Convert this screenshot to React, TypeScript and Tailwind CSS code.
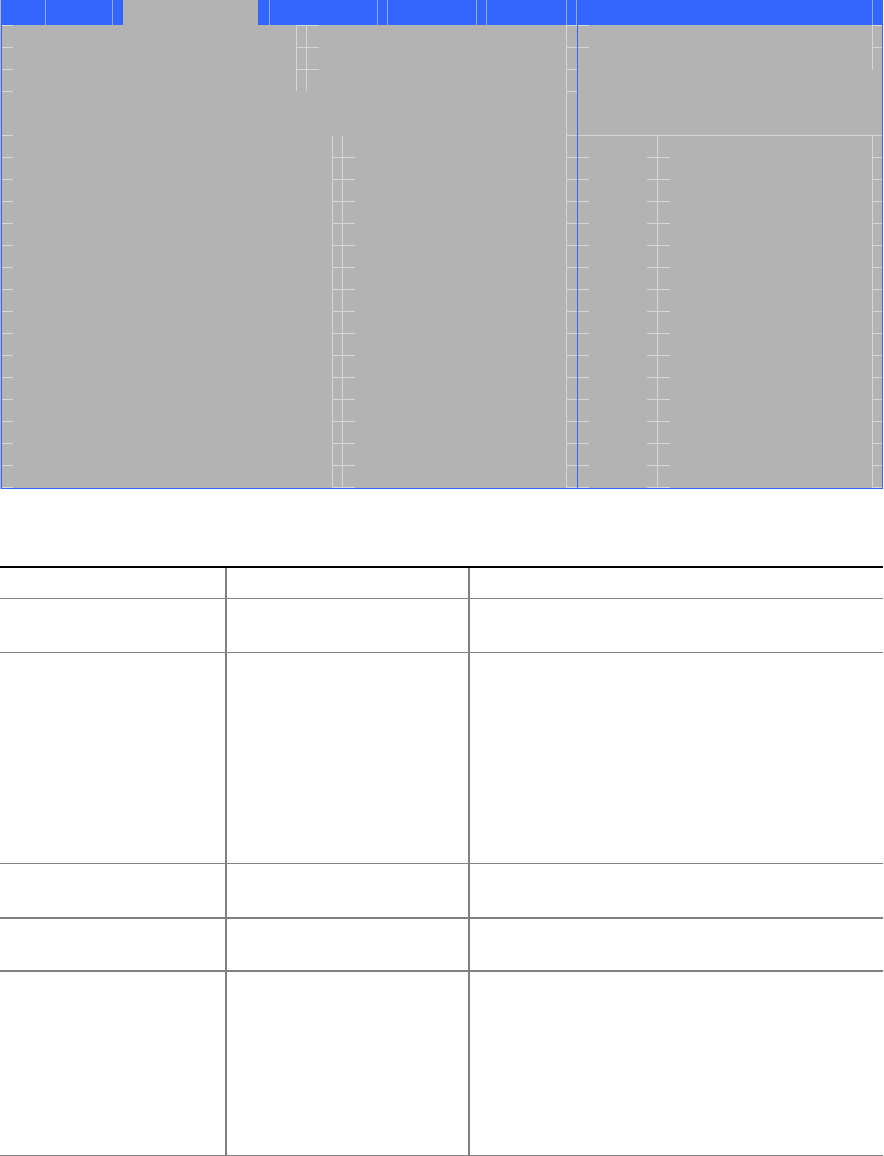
import React from "react";

// tick rows of the setup screen repeat every 22px
const ROW = 22;
const LINE = "#d6d6d6";

const range = (a: number, b: number) => Array.from({ length: b - a + 1 }, (_, i) => a + i);

type Bar = { x: number; y: number; w: number; h: number };

const ticks = (x: number, w: number, rows: number[]): Bar[] =>
  rows.map((k) => ({ x, y: k * ROW, w, h: 1 }));

const vline = (x: number, y: number, h: number): Bar => ({ x, y, w: 1, h });

const leftArt: Bar[] = [
  ...ticks(0, 11, [...range(0, 3), ...range(5, 21)]),
  vline(294, 0, 66),
  vline(304, 0, 66),
  ...ticks(294, 23, range(0, 2)),
  vline(330, 111, 352),
  vline(340, 111, 352),
  ...ticks(330, 23, range(6, 21)),
  vline(564, 0, 463),
  ...ticks(564, 11, [...range(0, 3), ...range(5, 21)]),
];

const rightArt: Bar[] = [
  ...ticks(0, 11, [0, 1, ...range(6, 21)]),
  { x: 0, y: 110, w: 304, h: 1 },
  vline(79, 110, 353),
  ...ticks(69, 23, range(6, 21)),
  vline(294, 0, 45),
  vline(294, 110, 353),
  ...ticks(294, 10, [0, 1, ...range(6, 21)]),
];

const LineArt = ({ bars, width }: { bars: Bar[]; width: number }) => (
  <svg width={width} height={463} shapeRendering="crispEdges" className="block">
    {bars.map((b, i) => (
      <rect key={i} x={b.x} y={b.y} width={b.w} height={b.h} fill={LINE} />
    ))}
  </svg>
);

// header strip: "sep" marks a thin divider, "tab" the selected menu
const headerParts = [
  "w-[44px]", "sep", "w-[66px]", "sep", "w-[10px]", "tab", "w-[11px]", "sep",
  "w-[107px]", "sep", "w-[9px]", "sep", "w-[88px]", "sep", "w-[9px]", "sep",
  "w-[79px]", "sep", "w-[9px]", "sep", "w-[295px]", "sep", "w-[10px]",
];

const SetupScreen = () => (
  <div className="w-[883px] bg-[#b3b3b3] pl-px">
    <div className="flex h-[25px] bg-[#3366ff]">
      {headerParts.map((p, i) => {
        if (p === "sep") return <div key={i} className="w-px bg-[#8fa9ff]" />;
        if (p === "tab") return <div key={i} className="w-[135px] bg-[#b3b3b3]" />;
        return <div key={i} className={p} />;
      })}
    </div>
    <div className="flex h-[464px] border-x border-b border-[#3366ff]">
      <div className="w-[575px]">
        <LineArt bars={leftArt} width={575} />
      </div>
      <div className="w-[305px] border-l border-[#3366ff]">
        <LineArt bars={rightArt} width={304} />
      </div>
    </div>
  </div>
);

const rows = [
  { h: "h-[30px]", line: "border-b" },
  { h: "h-[53px]", line: "border-b" },
  { h: "h-[210px]", line: "border-b" },
  { h: "h-[53px]", line: "border-b-2" },
  { h: "h-[51px]", line: "border-b-2" },
  { h: "h-[183px]", line: "border-b-2" },
];

const SettingsTable = () => (
  <div className="mt-[77px] w-[883px] border-t-2 border-black">
    {rows.map((r, i) => (
      <div
        key={i}
        className={`grid grid-cols-[227px_243px_413px] border-[#808080] ${r.line}`}
      >
        <div className={`${r.h} border-r-2 border-[#808080]`} />
        <div className={`${r.h} border-r-2 border-[#808080]`} />
        <div className={r.h} />
      </div>
    ))}
  </div>
);

export default function App() {
  return (
    <div className="h-[1156px] w-[884px] overflow-hidden bg-white font-['Liberation_Sans',sans-serif]">
      <SetupScreen />
      <SettingsTable />
    </div>
  );
}
